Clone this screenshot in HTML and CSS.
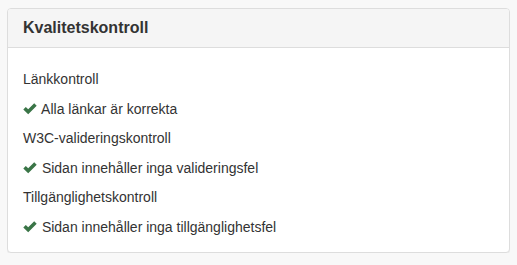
FILE: index.html
```html
<!DOCTYPE html>
<html lang="sv">
<head>
    <meta charset="UTF-8">
    <meta name="viewport" content="width=device-width, initial-scale=1.0">
    <title>Kvalitetskontroll</title>
    <link rel="stylesheet" href="styles.css">
</head>
<body>

<div class="panel">
    <div class="panel-heading">
        <h3 class="panel-title">Kvalitetskontroll</h3>
    </div>
    <div class="panel-body">
        <p>Länkkontroll</p>
        <p class="ok">
            <svg class="check" viewBox="0 0 14 12" width="14" height="12"><path d="M0.3 6.4 L2.8 3.9 L5.2 6.3 L11.2 0.3 L13.7 2.8 L5.2 11.3 Z" fill="#3a7547"/></svg>
            Alla länkar är korrekta
        </p>
        <p>W3C-valideringskontroll</p>
        <p class="ok">
            <svg class="check" viewBox="0 0 14 12" width="14" height="12"><path d="M0.3 6.4 L2.8 3.9 L5.2 6.3 L11.2 0.3 L13.7 2.8 L5.2 11.3 Z" fill="#3a7547"/></svg>
            Sidan innehåller inga valideringsfel
        </p>
        <p>Tillgänglighetskontroll</p>
        <p class="ok">
            <svg class="check" viewBox="0 0 14 12" width="14" height="12"><path d="M0.3 6.4 L2.8 3.9 L5.2 6.3 L11.2 0.3 L13.7 2.8 L5.2 11.3 Z" fill="#3a7547"/></svg>
            Sidan innehåller inga tillgänglighetsfel
        </p>
    </div>
</div>

</body>
</html>
```

FILE: styles.css
```css
body {
    font-family: "Liberation Sans", Arial, sans-serif;
    font-size: 14px;
    color: #333;
    background: #f8f8f8;
    margin: 8px 7px;
}
.panel {
    background: #fff;
    border: 1px solid #ddd;
    border-radius: 4px;
    box-shadow: 0 1px 1px rgba(0,0,0,0.05);
}
.panel-heading {
    background: #f5f5f5;
    border-bottom: 1px solid #ddd;
    border-radius: 3px 3px 0 0;
    padding: 10px 15px;
}
.panel-title {
    margin: 0;
    font-size: 16px;
    font-weight: bold;
    line-height: 18px;
    color: #333;
}
.panel-body {
    padding: 22px 15px 15px;
}
.panel-body p {
    margin: 0 0 10px;
    line-height: 19.5px;
}
.panel-body p:last-child {
    margin-bottom: 0;
}
.check {
    vertical-align: -1px;
    margin-right: 1px;
}
```
